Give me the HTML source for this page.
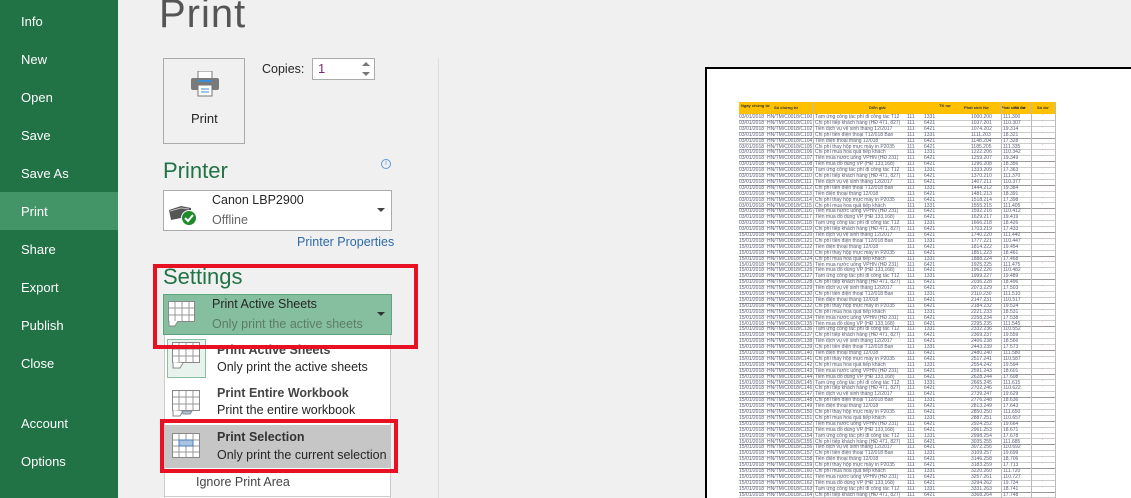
<!DOCTYPE html>
<html><head><meta charset="utf-8">
<style>
*{box-sizing:border-box;margin:0;padding:0}
html,body{width:1131px;height:498px;overflow:hidden}
body{background:#f0f0f0;font-family:"Segoe UI","Liberation Sans",sans-serif;position:relative}
.side{position:absolute;left:0;top:0;width:118px;height:498px;background:#217346}
.side div{position:absolute;left:21px;color:#fff;font-size:13px;line-height:16px}
.sel{position:absolute;left:0;top:192px;width:118px;height:38px;background:#439467}
.abs{position:absolute}
.title{left:159px;top:-8px;font-size:40px;color:#555;font-weight:300;letter-spacing:1px}
.pbtn{left:163px;top:58px;width:82px;height:86px;border:1px solid #aaa;background:#f0f0f0}
.h2{font-size:22px;color:#217346}
.box{border:1px solid #ababab;background:#fff}
.t13{font-size:12.5px;color:#262626}
.g13{font-size:12.5px;color:#666}
.red{position:absolute;border:4px solid #e81123}
</style></head><body>
<div class="side">
<div class="sel" style="left:0"></div>
<div style="top:14px">Info</div>
<div style="top:52px">New</div>
<div style="top:90px">Open</div>
<div style="top:128px">Save</div>
<div style="top:166px">Save As</div>
<div style="top:204px">Print</div>
<div style="top:242px">Share</div>
<div style="top:280px">Export</div>
<div style="top:318px">Publish</div>
<div style="top:356px">Close</div>
<div style="top:416px">Account</div>
<div style="top:454px">Options</div>
</div>

<div class="abs title">Print</div>
<div class="abs pbtn">
<svg class="abs" style="left:26px;top:12px" width="30" height="26" viewBox="0 0 30 26">
<rect x="8" y="0" width="14" height="8" fill="#fff" stroke="#777"/>
<rect x="1" y="7" width="28" height="12" rx="2" fill="#7a7a7a"/>
<rect x="8" y="9" width="14" height="2" fill="#3b8ed6"/>
<rect x="8" y="14" width="14" height="11" fill="#fff" stroke="#777"/>
<line x1="11" y1="18" x2="19" y2="18" stroke="#3b8ed6"/><line x1="11" y1="21" x2="19" y2="21" stroke="#3b8ed6"/>
</svg>
<div class="abs t13" style="left:27px;top:52px;font-size:13px">Print</div>
</div>
<div class="abs t13" style="left:262px;top:62px">Copies:</div>
<div class="abs box" style="left:312px;top:58px;width:63px;height:22px"></div>
<div class="abs" style="left:318px;top:61px;font-size:13px;color:#7a2a7a">1</div>
<div class="abs" style="left:362px;top:62px;width:0;height:0;border:4px solid transparent;border-bottom:4px solid #777;border-top:0"></div>
<div class="abs" style="left:362px;top:72px;width:0;height:0;border:4px solid transparent;border-top:4px solid #777;border-bottom:0"></div>

<div class="abs h2" style="left:163px;top:158px">Printer</div>
<div class="abs" style="left:381px;top:159px;width:10px;height:10px;border:1px solid #5b9bd5;border-radius:50%;font-size:7px;color:#5b9bd5;text-align:center;line-height:8px">i</div>
<div class="abs box" style="left:163px;top:190px;width:229px;height:41px"></div>
<svg class="abs" style="left:167px;top:202px" width="32" height="24" viewBox="0 0 32 24">
<path d="M2 8 L14 4 L24 6 L24 14 L4 18 Z" fill="#555"/><path d="M3 9 L14 6 L22 7" stroke="#bbb" fill="none"/>
<circle cx="22" cy="16" r="7.5" fill="#1e8a2e" stroke="#fff"/><path d="M18 16 l3 3 l5 -6" stroke="#fff" stroke-width="2" fill="none"/>
</svg>
<div class="abs t13" style="left:212px;top:193px">Canon LBP2900</div>
<div class="abs g13" style="left:212px;top:213px">Offline</div>
<div class="abs" style="left:377px;top:208px;border:4px solid transparent;border-top:4px solid #444;border-bottom:0"></div>
<div class="abs" style="left:297px;top:235px;font-size:12.5px;color:#2b6aa8">Printer Properties</div>

<div class="abs h2" style="left:163px;top:264px">Settings</div>
<div class="abs" style="left:163px;top:294px;width:229px;height:41px;background:#86bf9f;border:1px solid #5ea57d"></div>
<svg class="abs" style="left:168px;top:301px" width="30" height="26"><rect x="0.5" y="0.5" width="26" height="20" fill="#fff" stroke="#888"/><g stroke="#999"><line x1="7" y1="1" x2="7" y2="20"/><line x1="14" y1="1" x2="14" y2="20"/><line x1="21" y1="1" x2="21" y2="20"/><line x1="1" y1="7" x2="26" y2="7"/><line x1="1" y1="14" x2="26" y2="14"/></g><path d="M1 20 L1 25 L7 25 L10 20" fill="#fff" stroke="#888"/></svg>
<div class="abs t13" style="left:212px;top:297px">Print Active Sheets</div>
<div class="abs" style="left:212px;top:317px;font-size:12.5px;color:#5c7c68">Only print the active sheets</div>
<div class="abs" style="left:377px;top:312px;border:4px solid transparent;border-top:4px solid #333;border-bottom:0"></div>

<div class="abs" style="left:164px;top:335px;width:227px;height:163px;background:#fff;border-left:1px solid #ccc;border-right:1px solid #ccc"></div>
<div class="abs" style="left:167px;top:339px;width:39px;height:39px;background:#e9f3ed;border:1px solid #86bf9f"></div>
<svg class="abs" style="left:172px;top:342px" width="30" height="30"><rect x="0.5" y="0.5" width="27" height="20" fill="#fff" stroke="#888"/><g stroke="#999"><line x1="7" y1="1" x2="7" y2="20"/><line x1="14" y1="1" x2="14" y2="20"/><line x1="21" y1="1" x2="21" y2="20"/><line x1="1" y1="7" x2="27" y2="7"/><line x1="1" y1="14" x2="27" y2="14"/></g><path d="M1 20 L1 26 L8 26 L11 21" fill="#fff" stroke="#888"/></svg>
<div class="abs t13" style="left:217px;top:343px;font-weight:bold;color:#444">Print Active Sheets</div>
<div class="abs t13" style="left:217px;top:360px">Only print the active sheets</div>
<svg class="abs" style="left:172px;top:390px" width="32" height="30"><rect x="0.5" y="0.5" width="27" height="20" fill="#fff" stroke="#888"/><g stroke="#999"><line x1="7" y1="1" x2="7" y2="20"/><line x1="14" y1="1" x2="14" y2="20"/><line x1="21" y1="1" x2="21" y2="20"/><line x1="1" y1="7" x2="27" y2="7"/><line x1="1" y1="14" x2="27" y2="14"/></g><path d="M1 20 L1 26 L8 26 L11 21" fill="#fff" stroke="#888"/><path d="M10 21 L20 21 L18 24 L11 24Z" fill="#a9c4e0" stroke="#888"/></svg>
<div class="abs t13" style="left:217px;top:386px;font-weight:bold;color:#444">Print Entire Workbook</div>
<div class="abs t13" style="left:217px;top:403px">Print the entire workbook</div>
<div class="abs" style="left:164px;top:425px;width:227px;height:43px;background:#c6c6c6"></div>
<svg class="abs" style="left:172px;top:433px" width="30" height="26"><rect x="0.5" y="0.5" width="27" height="24" fill="#fff" stroke="#888"/><g stroke="#999"><line x1="7" y1="1" x2="7" y2="24"/><line x1="14" y1="1" x2="14" y2="24"/><line x1="21" y1="1" x2="21" y2="24"/><line x1="1" y1="7" x2="27" y2="7"/><line x1="1" y1="13" x2="27" y2="13"/><line x1="1" y1="19" x2="27" y2="19"/></g><rect x="7" y="7" width="14" height="6" fill="#a9c4e0" stroke="#4a7fc0"/></svg>
<div class="abs t13" style="left:217px;top:430px;font-weight:bold;color:#333">Print Selection</div>
<div class="abs t13" style="left:217px;top:448px">Only print the current selection</div>
<div class="abs g13" style="left:196px;top:475px;color:#444">Ignore Print Area</div>
<div class="abs" style="left:164px;top:496px;width:227px;height:1px;background:#ccc"></div>

<div class="red" style="left:153px;top:264px;width:265px;height:85px"></div>
<div class="red" style="left:160px;top:419px;width:238px;height:54px"></div>

<div class="abs" style="left:438px;top:58px;width:1px;height:440px;background:#ddd"></div>

<div class="abs" style="left:705px;top:67px;width:426px;height:431px;background:#fff;border-left:2px solid #000;border-top:2px solid #000"></div>
<div class="abs" id="sheet" style="left:739px;top:102px;width:317px;height:396px;overflow:hidden"></div>
<script>
var s=document.getElementById('sheet'),h='';
h+='<div style="position:absolute;left:0;top:0;width:317px;height:12px;background:#ffc000;font:bold 4px Liberation Sans;color:#333"><span style="position:absolute;left:2px;top:1px">Ngày chứng từ</span><span style="position:absolute;left:35px;top:3px">Số chứng từ</span><span style="position:absolute;left:130px;top:3px">Diễn giải</span><span style="position:absolute;left:200px;top:1px">TK nợ</span><span style="position:absolute;left:225px;top:3px">Phát sinh Nợ</span><span style="position:absolute;left:262px;top:3px">Phát sinh Có</span><span style="position:absolute;left:275px;top:3px">Số dư</span><span style="position:absolute;left:298px;top:3px">Số dư</span></div>';
var d=['Tạm ứng công tác phí đi công tác T12','Chi phí tiếp khách hàng (HĐ 471, 827)','Tiền dịch vụ vệ sinh tháng 12/2017','Chi phí tiền điện thoại T12/018 Ban','Tiền điện thoại tháng 12/018','Chi phí thay hộp mực máy in P2035','Chi phí mua hoa quả tiếp khách','Tiền mua nước uống VPHN (HĐ 231)','Tiền mua đồ dùng VP (HĐ 133,168)'];
for(var i=0;i<66;i++){var y=13+i*5.9;var bc=(i%4==3)?'#999':'#ccc';
h+='<div style="position:absolute;left:0;top:'+y+'px;width:317px;height:5.9px;border-bottom:1px solid '+bc+';font:5px/5px Liberation Sans;color:#5a6078;white-space:nowrap"><span style="position:absolute;left:0">'+(i<20?'03/01/2018':'15/01/2018')+'</span><span style="position:absolute;left:28px">HN/TM/C0018/C'+(100+i)+'</span><span style="position:absolute;left:76px">'+d[i%9]+'</span><span style="position:absolute;left:168px">111</span><span style="position:absolute;left:185px">'+(i%3?'6421':'1331')+'</span><span style="position:absolute;left:232px">'+(1000+i*37)+'.'+(200+i)+'</span><span style="position:absolute;left:264px">1'+(11-i%5)+'.'+(300+i*7)+'</span><span style="position:absolute;left:303px;color:#e89">\'</span></div>';}
h+='<div style="position:absolute;left:74px;top:0;width:1px;height:400px;background:#bbb"></div><div style="position:absolute;left:262px;top:0;width:1px;height:400px;background:#bbb"></div><div style="position:absolute;left:292px;top:0;width:1px;height:400px;background:#bbb"></div><div style="position:absolute;left:316px;top:0;width:1px;height:400px;background:#bbb"></div>';
s.innerHTML=h;
</script>
</body></html>
